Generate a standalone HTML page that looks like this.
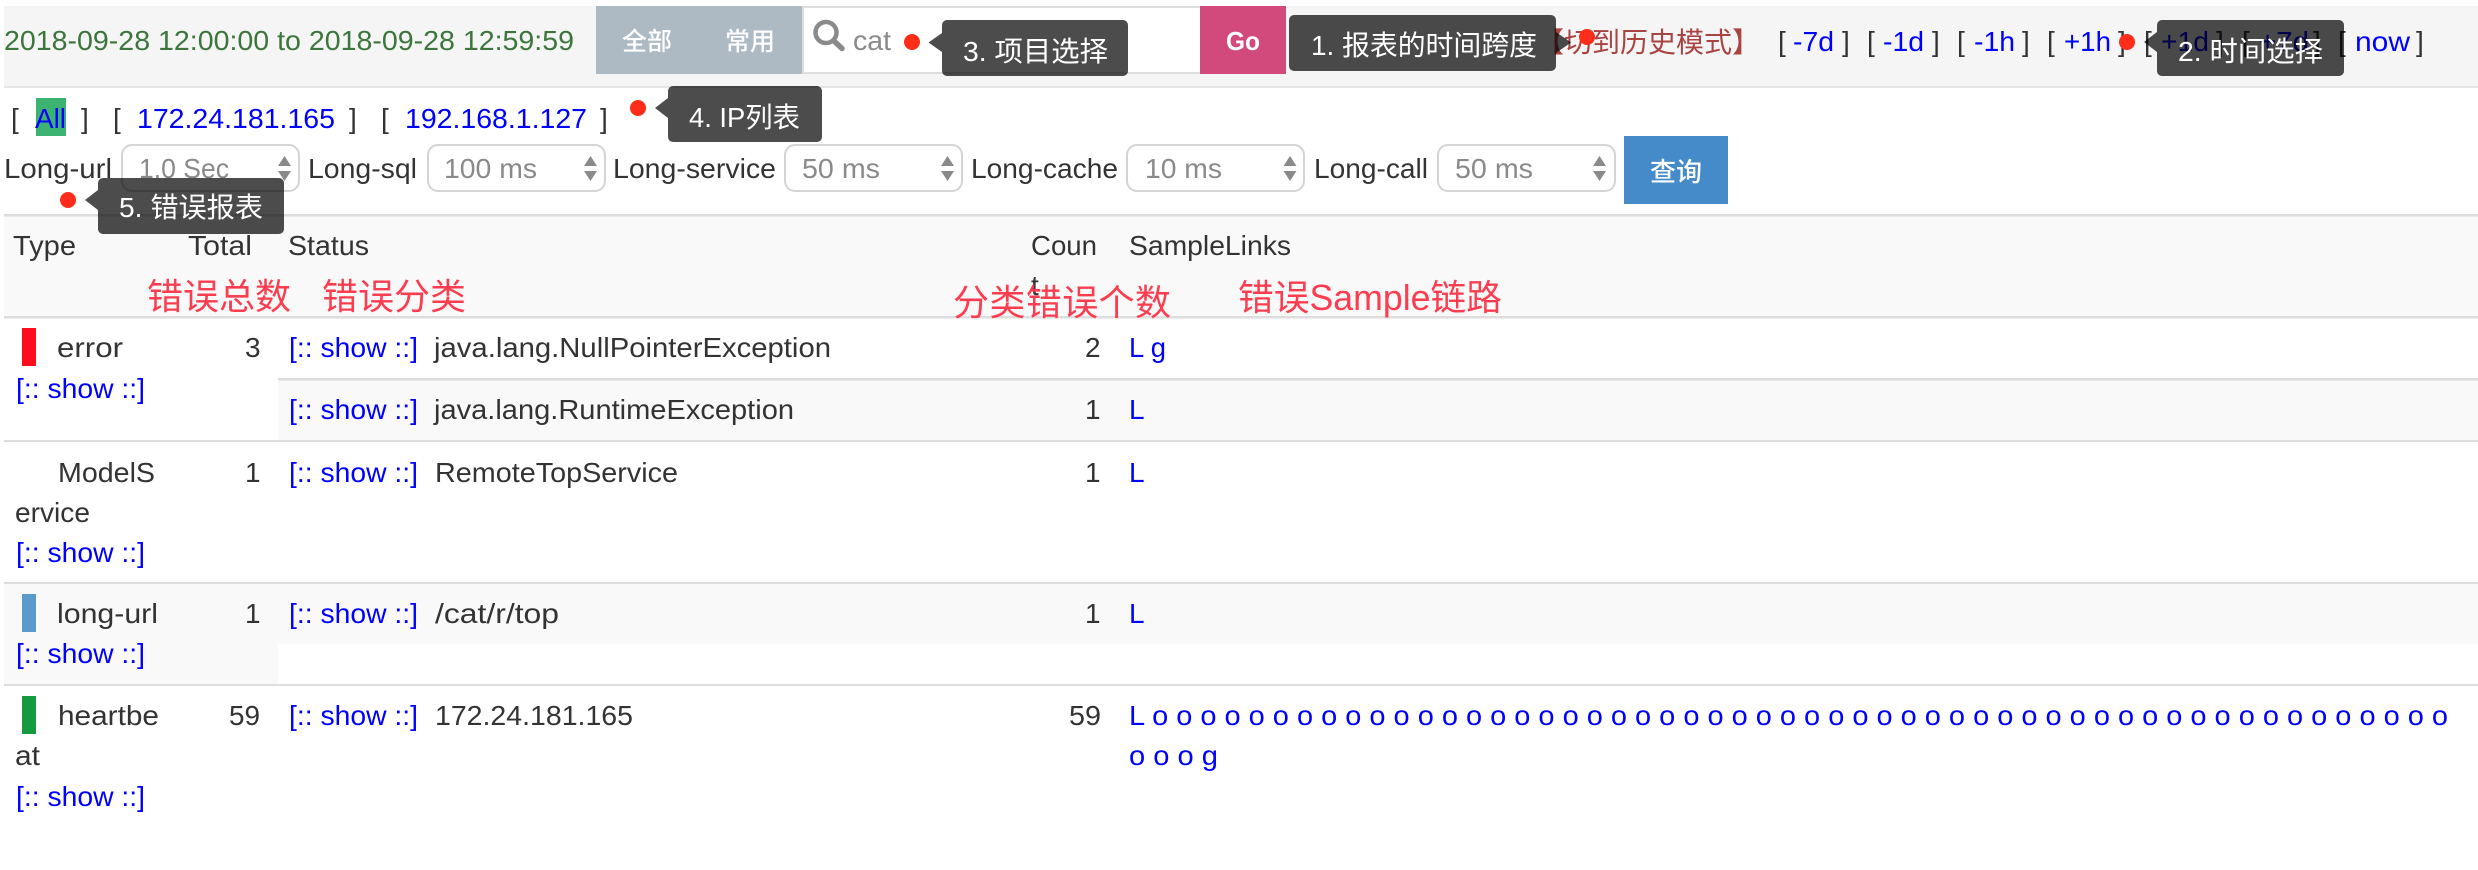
<!DOCTYPE html>
<html>
<head>
<meta charset="utf-8">
<title>Problem report</title>
<style>
html,body{margin:0;padding:0;background:#fff;width:2478px;height:870px;overflow:hidden}
svg{display:block}
text{font-family:"Liberation Sans","Noto Sans CJK SC",sans-serif;font-size:28px;fill:#333}
.l{fill:#0000ff}
.w{fill:#fff}
.g{fill:#8a8a8a}
.r{font-size:36px;fill:#fc3d50}
.h{fill:#a94442}
</style>
</head>
<body>
<svg xmlns="http://www.w3.org/2000/svg" width="2478" height="870" viewBox="0 0 2478 870">
<!-- nav -->
<rect x="4" y="6" width="2474" height="80" fill="#f5f5f5"/>
<rect x="4" y="86" width="2474" height="2" fill="#e5e5e5"/>
<text x="4" y="50" textLength="570" lengthAdjust="spacingAndGlyphs" style="fill:#3c763d">2018-09-28 12:00:00 to 2018-09-28 12:59:59</text>
<rect x="596" y="6" width="206" height="68" fill="#adbac4"/>
<text class="w" x="622" y="50" style="font-size:25px;font-weight:500">全部</text>
<text class="w" x="725" y="50" style="font-size:25px;font-weight:500">常用</text>
<rect x="802" y="6" width="398" height="68" fill="#ddd"/>
<rect x="804" y="8" width="396" height="64" fill="#fff"/>
<circle cx="826" cy="32.5" r="10.5" fill="none" stroke="#8a8a8a" stroke-width="4.5"/>
<path d="M834 41 L842 48.5" stroke="#8a8a8a" stroke-width="5.5" stroke-linecap="round"/>
<text class="g" x="853" y="50" textLength="38" lengthAdjust="spacingAndGlyphs">cat</text>
<rect x="1200" y="6" width="86" height="68" fill="#d2497c"/>
<text class="w" x="1226" y="50" textLength="34" lengthAdjust="spacingAndGlyphs" style="font-size:26px;font-weight:bold">Go</text>
<text class="h" x="1536" y="52" textLength="224" lengthAdjust="spacingAndGlyphs">【切到历史模式】</text>
<text x="1778" y="51">[</text><text class="l" x="1793" y="51" textLength="41" lengthAdjust="spacingAndGlyphs">-7d</text><text x="1842" y="51">]</text>
<text x="1867" y="51">[</text><text class="l" x="1883" y="51" textLength="41" lengthAdjust="spacingAndGlyphs">-1d</text><text x="1932" y="51">]</text>
<text x="1957" y="51">[</text><text class="l" x="1974" y="51" textLength="41" lengthAdjust="spacingAndGlyphs">-1h</text><text x="2022" y="51">]</text>
<text x="2047" y="51">[</text><text class="l" x="2064" y="51" textLength="47" lengthAdjust="spacingAndGlyphs">+1h</text><text x="2118" y="51">]</text>
<text x="2144" y="51">[</text><text class="l" x="2161" y="51" textLength="48" lengthAdjust="spacingAndGlyphs">+1d</text><text x="2216" y="51">]</text>
<text x="2242" y="51">[</text><text class="l" x="2259" y="51" textLength="50" lengthAdjust="spacingAndGlyphs">+7d</text><text x="2313" y="51">]</text>
<text x="2338" y="51">[</text><text class="l" x="2355" y="51" textLength="55" lengthAdjust="spacingAndGlyphs">now</text><text x="2416" y="51">]</text>
<!-- ip row -->
<rect x="36" y="98" width="30" height="38" fill="#3cb371"/>
<text x="11" y="128">[</text><text class="l" x="35" y="128" textLength="31" lengthAdjust="spacingAndGlyphs">All</text><text x="81" y="128">]</text>
<text x="113" y="128">[</text><text class="l" x="137" y="128" textLength="198" lengthAdjust="spacingAndGlyphs">172.24.181.165</text><text x="349" y="128">]</text>
<text x="381" y="128">[</text><text class="l" x="405" y="128" textLength="182" lengthAdjust="spacingAndGlyphs">192.168.1.127</text><text x="600" y="128">]</text>
<!-- filter row -->
<text x="4" y="178" textLength="108" lengthAdjust="spacingAndGlyphs">Long-url</text>
<rect x="122" y="145" width="177" height="46" rx="10" fill="#fff" stroke="#d4d4d4" stroke-width="2"/>
<text class="g" x="139" y="178" textLength="90" lengthAdjust="spacingAndGlyphs">1.0 Sec</text>
<path d="M284.5 156 L291 166 L278 166 Z M278 171 L291 171 L284.5 181 Z" fill="#8a8a8a"/>
<text x="308" y="178" textLength="109" lengthAdjust="spacingAndGlyphs">Long-sql</text>
<rect x="428" y="145" width="177" height="46" rx="10" fill="#fff" stroke="#d4d4d4" stroke-width="2"/>
<text class="g" x="444" y="178" textLength="93" lengthAdjust="spacingAndGlyphs">100 ms</text>
<path d="M590.5 156 L597 166 L584 166 Z M584 171 L597 171 L590.5 181 Z" fill="#8a8a8a"/>
<text x="613" y="178" textLength="163" lengthAdjust="spacingAndGlyphs">Long-service</text>
<rect x="785" y="145" width="177" height="46" rx="10" fill="#fff" stroke="#d4d4d4" stroke-width="2"/>
<text class="g" x="802" y="178" textLength="78" lengthAdjust="spacingAndGlyphs">50 ms</text>
<path d="M947.5 156 L954 166 L941 166 Z M941 171 L954 171 L947.5 181 Z" fill="#8a8a8a"/>
<text x="971" y="178" textLength="147" lengthAdjust="spacingAndGlyphs">Long-cache</text>
<rect x="1127" y="145" width="177" height="46" rx="10" fill="#fff" stroke="#d4d4d4" stroke-width="2"/>
<text class="g" x="1145" y="178" textLength="77" lengthAdjust="spacingAndGlyphs">10 ms</text>
<path d="M1290 156 L1296.5 166 L1283.5 166 Z M1283.5 171 L1296.5 171 L1290 181 Z" fill="#8a8a8a"/>
<text x="1314" y="178" textLength="114" lengthAdjust="spacingAndGlyphs">Long-call</text>
<rect x="1438" y="145" width="177" height="46" rx="10" fill="#fff" stroke="#d4d4d4" stroke-width="2"/>
<text class="g" x="1455" y="178" textLength="78" lengthAdjust="spacingAndGlyphs">50 ms</text>
<path d="M1599.5 156 L1606 166 L1593 166 Z M1593 171 L1606 171 L1599.5 181 Z" fill="#8a8a8a"/>
<rect x="1624" y="136" width="104" height="68" fill="#458bc9"/>
<text class="w" x="1650" y="181" style="font-size:26px;font-weight:500">查询</text>
<!-- table -->
<rect x="4" y="214" width="2474" height="2.5" fill="#ddd"/>
<rect x="4" y="216.5" width="2474" height="100" fill="#f9f9f9"/>
<rect x="4" y="316" width="2474" height="2.5" fill="#ddd"/>
<text x="13" y="255" textLength="63" lengthAdjust="spacingAndGlyphs">Type</text>
<text x="188" y="255" textLength="64" lengthAdjust="spacingAndGlyphs">Total</text>
<text x="288" y="255" textLength="81" lengthAdjust="spacingAndGlyphs">Status</text>
<text x="1031" y="255" textLength="66" lengthAdjust="spacingAndGlyphs">Coun</text>
<text x="1031" y="295">t</text>
<text x="1129" y="255" textLength="162" lengthAdjust="spacingAndGlyphs">SampleLinks</text>
<!-- row error -->
<rect x="278" y="378" width="2200" height="2.5" fill="#ddd"/>
<rect x="278" y="380.5" width="2200" height="59.5" fill="#f9f9f9"/>
<rect x="22" y="328" width="14" height="38" fill="#ff0d1d"/>
<text x="57" y="357" textLength="66" lengthAdjust="spacingAndGlyphs">error</text>
<text x="245" y="357">3</text>
<text class="l" x="16" y="398" textLength="129" lengthAdjust="spacingAndGlyphs">[:: show ::]</text>
<text class="l" x="289" y="357" textLength="129" lengthAdjust="spacingAndGlyphs">[:: show ::]</text>
<text x="434" y="357" textLength="397" lengthAdjust="spacingAndGlyphs">java.lang.NullPointerException</text>
<text x="1085" y="357">2</text>
<text class="l" x="1129" y="357" textLength="37" lengthAdjust="spacingAndGlyphs">L g</text>
<text class="l" x="289" y="419" textLength="129" lengthAdjust="spacingAndGlyphs">[:: show ::]</text>
<text x="434" y="419" textLength="360" lengthAdjust="spacingAndGlyphs">java.lang.RuntimeException</text>
<text x="1085" y="419">1</text>
<text class="l" x="1129" y="419">L</text>
<!-- row model -->
<rect x="4" y="440" width="2474" height="2" fill="#ddd"/>
<text x="58" y="482" textLength="97" lengthAdjust="spacingAndGlyphs">ModelS</text>
<text x="15" y="522" textLength="75" lengthAdjust="spacingAndGlyphs">ervice</text>
<text class="l" x="16" y="562" textLength="129" lengthAdjust="spacingAndGlyphs">[:: show ::]</text>
<text x="245" y="482">1</text>
<text class="l" x="289" y="482" textLength="129" lengthAdjust="spacingAndGlyphs">[:: show ::]</text>
<text x="435" y="482" textLength="243" lengthAdjust="spacingAndGlyphs">RemoteTopService</text>
<text x="1085" y="482">1</text>
<text class="l" x="1129" y="482">L</text>
<!-- row long-url -->
<rect x="4" y="584" width="2474" height="60" fill="#f9f9f9"/>
<rect x="4" y="644" width="274" height="40" fill="#f9f9f9"/>
<rect x="4" y="582" width="2474" height="2" fill="#ddd"/>
<rect x="22" y="594" width="14" height="38" fill="#5a9bcb"/>
<text x="57" y="623" textLength="101" lengthAdjust="spacingAndGlyphs">long-url</text>
<text class="l" x="16" y="663" textLength="129" lengthAdjust="spacingAndGlyphs">[:: show ::]</text>
<text x="245" y="623">1</text>
<text class="l" x="289" y="623" textLength="129" lengthAdjust="spacingAndGlyphs">[:: show ::]</text>
<text x="435" y="623" textLength="124" lengthAdjust="spacingAndGlyphs">/cat/r/top</text>
<text x="1085" y="623">1</text>
<text class="l" x="1129" y="623">L</text>
<!-- row heartbeat -->
<rect x="4" y="684" width="2474" height="2" fill="#ddd"/>
<rect x="22" y="696" width="14" height="38" fill="#169a3f"/>
<text x="58" y="725" textLength="101" lengthAdjust="spacingAndGlyphs">heartbe</text>
<text x="15" y="765" textLength="25" lengthAdjust="spacingAndGlyphs">at</text>
<text class="l" x="16" y="806" textLength="129" lengthAdjust="spacingAndGlyphs">[:: show ::]</text>
<text x="229" y="725" textLength="31" lengthAdjust="spacingAndGlyphs">59</text>
<text class="l" x="289" y="725" textLength="129" lengthAdjust="spacingAndGlyphs">[:: show ::]</text>
<text x="435" y="725" textLength="198" lengthAdjust="spacingAndGlyphs">172.24.181.165</text>
<text x="1069" y="725" textLength="32" lengthAdjust="spacingAndGlyphs">59</text>
<text class="l" x="1129" y="725" textLength="1319" lengthAdjust="spacingAndGlyphs">L o o o o o o o o o o o o o o o o o o o o o o o o o o o o o o o o o o o o o o o o o o o o o o o o o o o o o o</text>
<text class="l" x="1129" y="765" textLength="89" lengthAdjust="spacingAndGlyphs">o o o g</text>
<!-- red annotations -->
<text class="r" x="147" y="309">错误总数</text>
<text class="r" x="322" y="309">错误分类</text>
<text class="r" x="953" y="315" textLength="218">分类错误个数</text>
<text class="r" x="1238" y="310" textLength="264" lengthAdjust="spacingAndGlyphs">错误Sample链路</text>
<!-- tooltips -->
<g fill="#000" fill-opacity=".7">
<path d="M947 20 H1123 a5 5 0 0 1 5 5 V71 a5 5 0 0 1 -5 5 H947 a5 5 0 0 1 -5 -5 V52 L928.5 42.5 L942 33 V25 a5 5 0 0 1 5 -5 Z"/>
<path d="M1294 15 H1551 a5 5 0 0 1 5 5 V32 L1571 42.5 L1556 53 V66 a5 5 0 0 1 -5 5 H1294 a5 5 0 0 1 -5 -5 V20 a5 5 0 0 1 5 -5 Z"/>
<path d="M2162 20 H2339 a5 5 0 0 1 5 5 V71 a5 5 0 0 1 -5 5 H2162 a5 5 0 0 1 -5 -5 V52 L2144 42 L2157 32 V25 a5 5 0 0 1 5 -5 Z"/>
<path d="M673 86 H817 a5 5 0 0 1 5 5 V137 a5 5 0 0 1 -5 5 H673 a5 5 0 0 1 -5 -5 V118 L655 108 L668 98 V91 a5 5 0 0 1 5 -5 Z"/>
<path d="M103 178 H279 a5 5 0 0 1 5 5 V229 a5 5 0 0 1 -5 5 H103 a5 5 0 0 1 -5 -5 V210 L85 200 L98 190 V183 a5 5 0 0 1 5 -5 Z"/>
</g>
<text class="w" x="963" y="61" textLength="145" lengthAdjust="spacingAndGlyphs">3. 项目选择</text>
<text class="w" x="1311" y="55" textLength="226" lengthAdjust="spacingAndGlyphs">1. 报表的时间跨度</text>
<text class="w" x="2178" y="61" textLength="145" lengthAdjust="spacingAndGlyphs">2. 时间选择</text>
<text class="w" x="689" y="127" textLength="111" lengthAdjust="spacingAndGlyphs">4. IP列表</text>
<text class="w" x="119" y="217" textLength="144" lengthAdjust="spacingAndGlyphs">5. 错误报表</text>
<!-- dots -->
<g fill="#ff2d1a">
<circle cx="912" cy="42" r="8"/>
<circle cx="1587" cy="37" r="8"/>
<circle cx="2127" cy="42" r="8"/>
<circle cx="638" cy="108" r="8"/>
<circle cx="68" cy="200" r="8"/>
</g>
</svg>
</body>
</html>
